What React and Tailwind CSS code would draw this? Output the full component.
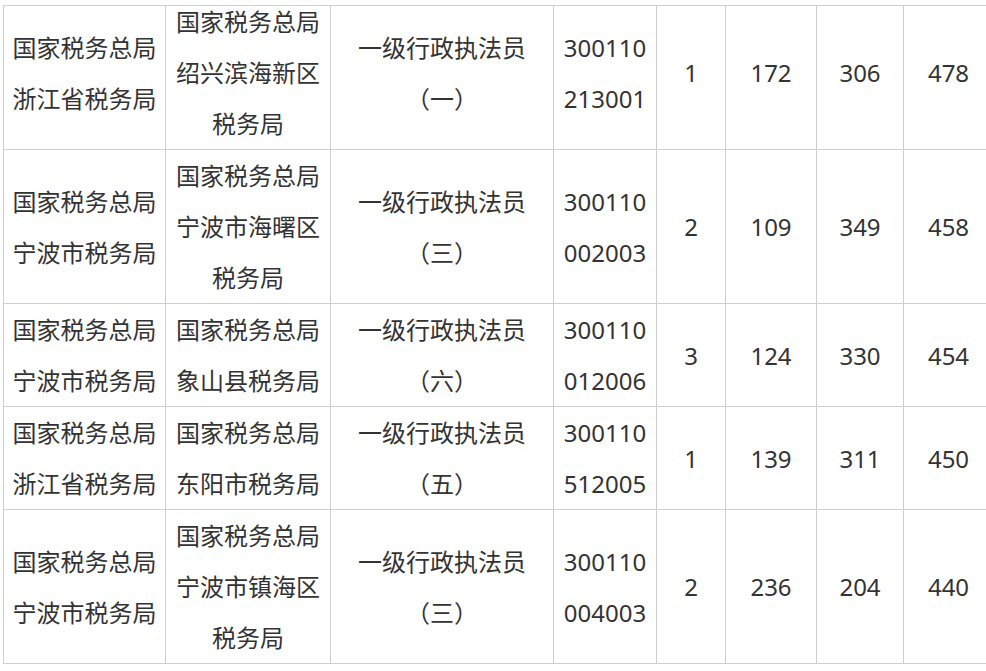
import React from "react";

const rows = [
  {
    a: ["国家税务总局", "浙江省税务局"],
    b: ["国家税务总局", "绍兴滨海新区", "税务局"],
    c: ["一级行政执法员", "（一）"],
    code: ["300110", "213001"],
    n: "1",
    x: "172",
    y: "306",
    t: "478",
  },
  {
    a: ["国家税务总局", "宁波市税务局"],
    b: ["国家税务总局", "宁波市海曙区", "税务局"],
    c: ["一级行政执法员", "（三）"],
    code: ["300110", "002003"],
    n: "2",
    x: "109",
    y: "349",
    t: "458",
  },
  {
    a: ["国家税务总局", "宁波市税务局"],
    b: ["国家税务总局", "象山县税务局"],
    c: ["一级行政执法员", "（六）"],
    code: ["300110", "012006"],
    n: "3",
    x: "124",
    y: "330",
    t: "454",
  },
  {
    a: ["国家税务总局", "浙江省税务局"],
    b: ["国家税务总局", "东阳市税务局"],
    c: ["一级行政执法员", "（五）"],
    code: ["300110", "512005"],
    n: "1",
    x: "139",
    y: "311",
    t: "450",
  },
  {
    a: ["国家税务总局", "宁波市税务局"],
    b: ["国家税务总局", "宁波市镇海区", "税务局"],
    c: ["一级行政执法员", "（三）"],
    code: ["300110", "004003"],
    n: "2",
    x: "236",
    y: "204",
    t: "440",
  },
];

const Lines = ({ lines }) => (
  <div className="flex flex-col items-center">
    {lines.map((l, i) => (
      <span key={i} className="whitespace-nowrap">
        {l}
      </span>
    ))}
  </div>
);

// first row is cut off at the top in the screenshot
const Cell = ({ first, children }) =>
  first ? (
    <div className="h-[144px] border-l border-b border-[#cfcfcf] flex flex-col justify-end overflow-hidden">
      <div className="h-[153px] shrink-0 flex items-center justify-center text-center">{children}</div>
    </div>
  ) : (
    <div className="border-l border-b border-[#cfcfcf] flex items-center justify-center text-center">
      {children}
    </div>
  );

export default function App() {
  return (
    <div
      className="w-[986px] h-[671px] overflow-hidden bg-white text-[#333333] text-[24px] leading-[51px]"
      style={{ fontFamily: '"Noto Sans", "Noto Sans CJK SC", sans-serif' }}
    >
      <div className="pt-[5px] pl-[3px]">
        <div className="w-[990px] border-t border-[#cfcfcf] grid grid-cols-[162px_165px_223px_103px_69px_91px_87px_90px]">
          {rows.map((r, i) => {
            const first = i === 0;
            return (
              <React.Fragment key={i}>
                <Cell first={first}>
                  <Lines lines={r.a} />
                </Cell>
                <Cell first={first}>
                  <Lines lines={r.b} />
                </Cell>
                <Cell first={first}>
                  <Lines lines={r.c} />
                </Cell>
                <Cell first={first}>
                  <Lines lines={r.code} />
                </Cell>
                <Cell first={first}>{r.n}</Cell>
                <Cell first={first}>{r.x}</Cell>
                <Cell first={first}>{r.y}</Cell>
                <Cell first={first}>{r.t}</Cell>
              </React.Fragment>
            );
          })}
        </div>
      </div>
    </div>
  );
}
